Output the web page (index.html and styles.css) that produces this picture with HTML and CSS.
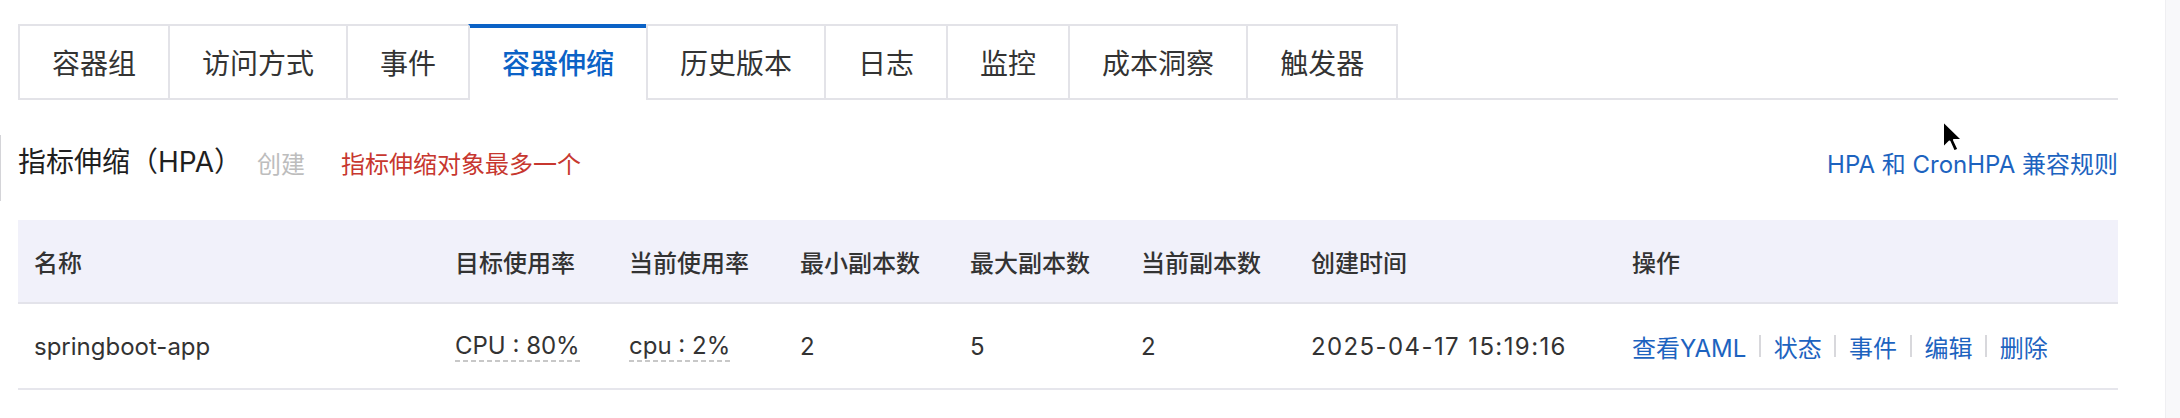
FILE: index.html
```html
<!DOCTYPE html>
<html lang="zh-CN">
<head>
<meta charset="utf-8">
<title>容器伸缩</title>
<link rel="stylesheet" href="styles.css">
</head>
<body>
<div class="app">
  <main class="main">
    <nav class="tabs">
      <div class="tab">容器组</div>
      <div class="tab">访问方式</div>
      <div class="tab">事件</div>
      <div class="tab active">容器伸缩</div>
      <div class="tab">历史版本</div>
      <div class="tab">日志</div>
      <div class="tab">监控</div>
      <div class="tab">成本洞察</div>
      <div class="tab">触发器</div>
    </nav>
    <section class="hpa">
      <div class="hpa-head">
        <div class="hpa-title-group">
          <h2 class="hpa-title">指标伸缩（HPA）</h2>
          <span class="create">创建</span>
          <span class="limit">指标伸缩对象最多一个</span>
        </div>
        <a class="rule-link">HPA 和 CronHPA 兼容规则</a>
      </div>
      <table class="grid">
        <colgroup>
          <col class="c-name">
          <col class="c-target">
          <col class="c-current">
          <col class="c-min">
          <col class="c-max">
          <col class="c-cur">
          <col class="c-time">
          <col class="c-ops">
        </colgroup>
        <thead>
          <tr>
            <th>名称</th>
            <th>目标使用率</th>
            <th>当前使用率</th>
            <th>最小副本数</th>
            <th>最大副本数</th>
            <th>当前副本数</th>
            <th>创建时间</th>
            <th>操作</th>
          </tr>
        </thead>
        <tbody>
          <tr>
            <td>springboot-app</td>
            <td><span class="metric">CPU : 80%</span></td>
            <td><span class="metric">cpu : 2%</span></td>
            <td>2</td>
            <td>5</td>
            <td>2</td>
            <td class="time">2025-04-17 15:19:16</td>
            <td>
              <span class="ops">
                <a class="op">查看YAML</a><span class="sep"></span>
                <a class="op">状态</a><span class="sep"></span>
                <a class="op">事件</a><span class="sep"></span>
                <a class="op">编辑</a><span class="sep"></span>
                <a class="op">删除</a>
              </span>
            </td>
          </tr>
        </tbody>
      </table>
    </section>
  </main>
  <div class="scroll-gutter"></div>
</div>
<div class="edge-mark"></div>
<svg class="cursor" width="24" height="36" viewBox="0 0 24 36">
  <path d="M2 2 L2 29 L8.5 22.5 L13 32.5 L17.5 30.5 L13 21 L21.5 21 Z" fill="#000" stroke="#fff" stroke-width="2" stroke-linejoin="round"/>
</svg>
</body>
</html>
```

FILE: styles.css
```css
html, body {
  margin: 0;
  padding: 0;
  background: #ffffff;
}

body {
  font-family: "Inter", "Noto Sans CJK SC", sans-serif;
  color: #333333;
  position: relative;
  overflow: hidden;
}

.app {
  display: flex;
  height: 418px;
}

.main {
  flex: none;
  width: 2100px;
  padding: 24px 0 0 18px;
}

.scroll-gutter {
  margin-left: auto;
  width: 14px;
  background: #f8f8fa;
  border-left: 1px solid #efeff2;
}

/* Tabs */
.tabs {
  display: flex;
  align-items: flex-start;
  border-bottom: 2px solid #e3e3e8;
}

.tab {
  box-sizing: border-box;
  height: 74px;
  padding: 0 32px;
  border-top: 2px solid #e3e3e8;
  border-left: 2px solid #e3e3e8;
  display: flex;
  align-items: center;
  font-size: 28px;
  color: #333333;
  white-space: nowrap;
  background: #ffffff;
}

.tab:last-child {
  border-right: 2px solid #e3e3e8;
}

.tab.active {
  height: 76px;
  margin-bottom: -2px;
  padding-bottom: 2px;
  border-top-color: #0b62c6;
  box-shadow: inset 0 2px 0 #0b62c6;
  color: #0b62c6;
  font-weight: 500;
}

/* HPA header */
.hpa-head {
  display: flex;
  justify-content: space-between;
  align-items: center;
  height: 40px;
  margin-top: 42px;
}

.hpa-title-group {
  display: flex;
  align-items: center;
}

.hpa-title {
  margin: 0;
  font-size: 28px;
  font-weight: 400;
  color: #1f1f1f;
  line-height: 40px;
}

.create {
  margin-left: 15px;
  font-size: 24px;
  color: #bdbdbd;
}

.limit {
  margin-left: 36px;
  font-size: 24px;
  color: #c7372f;
}

.rule-link {
  font-size: 24px;
  color: #1d63bf;
}

/* Table */
.grid {
  margin-top: 38px;
  width: 2100px;
  table-layout: fixed;
  border-collapse: separate;
  border-spacing: 0;
}

.c-name { width: 421px; }
.c-target { width: 174px; }
.c-current { width: 171px; }
.c-min { width: 170px; }
.c-max { width: 171px; }
.c-cur { width: 170px; }
.c-time { width: 321px; }

.grid th,
.grid td {
  box-sizing: border-box;
  padding: 0 16px;
  text-align: left;
  font-size: 24px;
  white-space: nowrap;
}

.grid th {
  height: 84px;
  background: #f1f1fa;
  border-bottom: 2px solid #e3e3ea;
  font-weight: 500;
  color: #333333;
}

.grid td {
  height: 86px;
  border-bottom: 2px solid #e6e6ec;
  color: #333333;
}

.grid td.time {
  letter-spacing: 1.4px;
}

.metric {
  display: inline-block;
  line-height: 24px;
  padding-bottom: 4px;
  background-image: repeating-linear-gradient(90deg, #c8c8c8 0 5px, transparent 5px 8px);
  background-size: 100% 2px;
  background-position: left bottom;
  background-repeat: no-repeat;
}

.ops {
  display: inline-flex;
  align-items: center;
}

.op {
  color: #1d63bf;
}

.sep {
  width: 2px;
  height: 22px;
  margin: 0 12.7px;
  background: #d8d8dc;
}

/* decorations */
.edge-mark {
  position: absolute;
  left: 0;
  top: 135px;
  width: 1px;
  height: 66px;
  background: #d4d4d8;
}

.cursor {
  position: absolute;
  left: 1941px;
  top: 119px;
}
```
